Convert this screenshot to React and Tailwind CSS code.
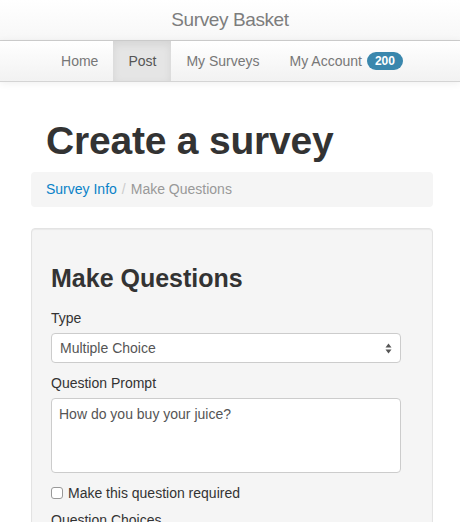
import React from "react";

export default function App() {
  const navLinks = [
    { name: "Home", active: false },
    { name: "Post", active: true },
    { name: "My Surveys", active: false },
    { name: "My Account", active: false, badge: "200" },
  ];

  return (
    <div className="min-h-[522px] bg-white text-[#333] font-['Helvetica_Neue','Liberation_Sans',Arial,sans-serif]">
      {/* Title bar */}
      <header className="h-[41px] flex items-center justify-center bg-gradient-to-b from-white to-[#f7f7f7] border-b border-[#cfcfcf]">
        <span className="text-[19px] font-light text-[#7d7d7d] tracking-[-0.4px]">Survey Basket</span>
      </header>

      {/* Nav */}
      <nav className="h-[41px] flex justify-center bg-gradient-to-b from-white to-[#f2f2f2] border-b border-[#d4d4d4] shadow-[0_1px_8px_rgba(0,0,0,0.07)]">
        <ul className="flex pl-[4px]">
          {navLinks.map((link) => (
            <li
              key={link.name}
              className={`flex items-center px-[15px] text-[14px] ${
                link.active
                  ? "bg-[#e5e5e5] text-[#555] shadow-[inset_0_3px_8px_rgba(0,0,0,0.08)]"
                  : "text-[#777]"
              }`}
            >
              <span>{link.name}</span>
              {link.badge && (
                <span className="ml-[5px] h-[18px] px-[8px] rounded-full bg-[#3a87ad] text-white text-[12px] font-bold leading-[18px]">
                  {link.badge}
                </span>
              )}
            </li>
          ))}
        </ul>
      </nav>

      <main className="ml-[31px] w-[402px]">
        <h1 className="mt-[38px] pl-[15px] text-[39px] leading-[42px] font-bold text-[#333] tracking-[-0.2px]">
          Create a survey
        </h1>

        {/* Breadcrumb */}
        <div className="mt-[10px] h-[35px] flex items-center px-[15px] bg-[#f5f5f5] rounded-[4px] text-[14px]">
          <span className="text-[#0a82c8]">Survey Info</span>
          <span className="px-[5px] text-[#ccc]">/</span>
          <span className="text-[#999]">Make Questions</span>
        </div>

        {/* Well */}
        <section className="mt-[21px] h-[300px] px-[19px] pt-[19px] bg-[#f5f5f5] border border-[#e3e3e3] rounded-[4px] shadow-[inset_0_1px_1px_rgba(0,0,0,0.05)]">
          <h2 className="mt-[15px] text-[25px] leading-[30px] font-bold text-[#333]">Make Questions</h2>

          <label className="block mt-[15px] text-[14px] leading-[20px]">Type</label>
          <div className="mt-[5px] w-[350px] h-[30px] flex items-center justify-between pl-[8px] pr-[8px] bg-white border border-[#ccc] rounded-[4px] text-[14px] text-[#555]">
            <span>Multiple Choice</span>
            <svg width="7" height="11" viewBox="0 0 7 11" className="text-[#555]">
              <path d="M3.5 0.5 L6.5 4.5 L0.5 4.5 Z" fill="currentColor" />
              <path d="M3.5 10.5 L6.5 6.5 L0.5 6.5 Z" fill="currentColor" />
            </svg>
          </div>

          <label className="block mt-[10px] text-[14px] leading-[20px]">Question Prompt</label>
          <div className="mt-[5px] w-[350px] h-[75px] px-[7px] pt-[5px] bg-white border border-[#ccc] rounded-[4px] text-[14px] leading-[20px] text-[#555]">
            How do you buy your juice?
          </div>

          <div className="mt-[10px] flex items-center h-[20px] text-[14px]">
            <span className="w-[12px] h-[12px] border border-[#999] rounded-[3px] bg-white" />
            <span className="ml-[5px]">Make this question required</span>
          </div>

          <label className="block mt-[7px] text-[14px] leading-[20px]">Question Choices</label>
        </section>
      </main>
    </div>
  );
}
